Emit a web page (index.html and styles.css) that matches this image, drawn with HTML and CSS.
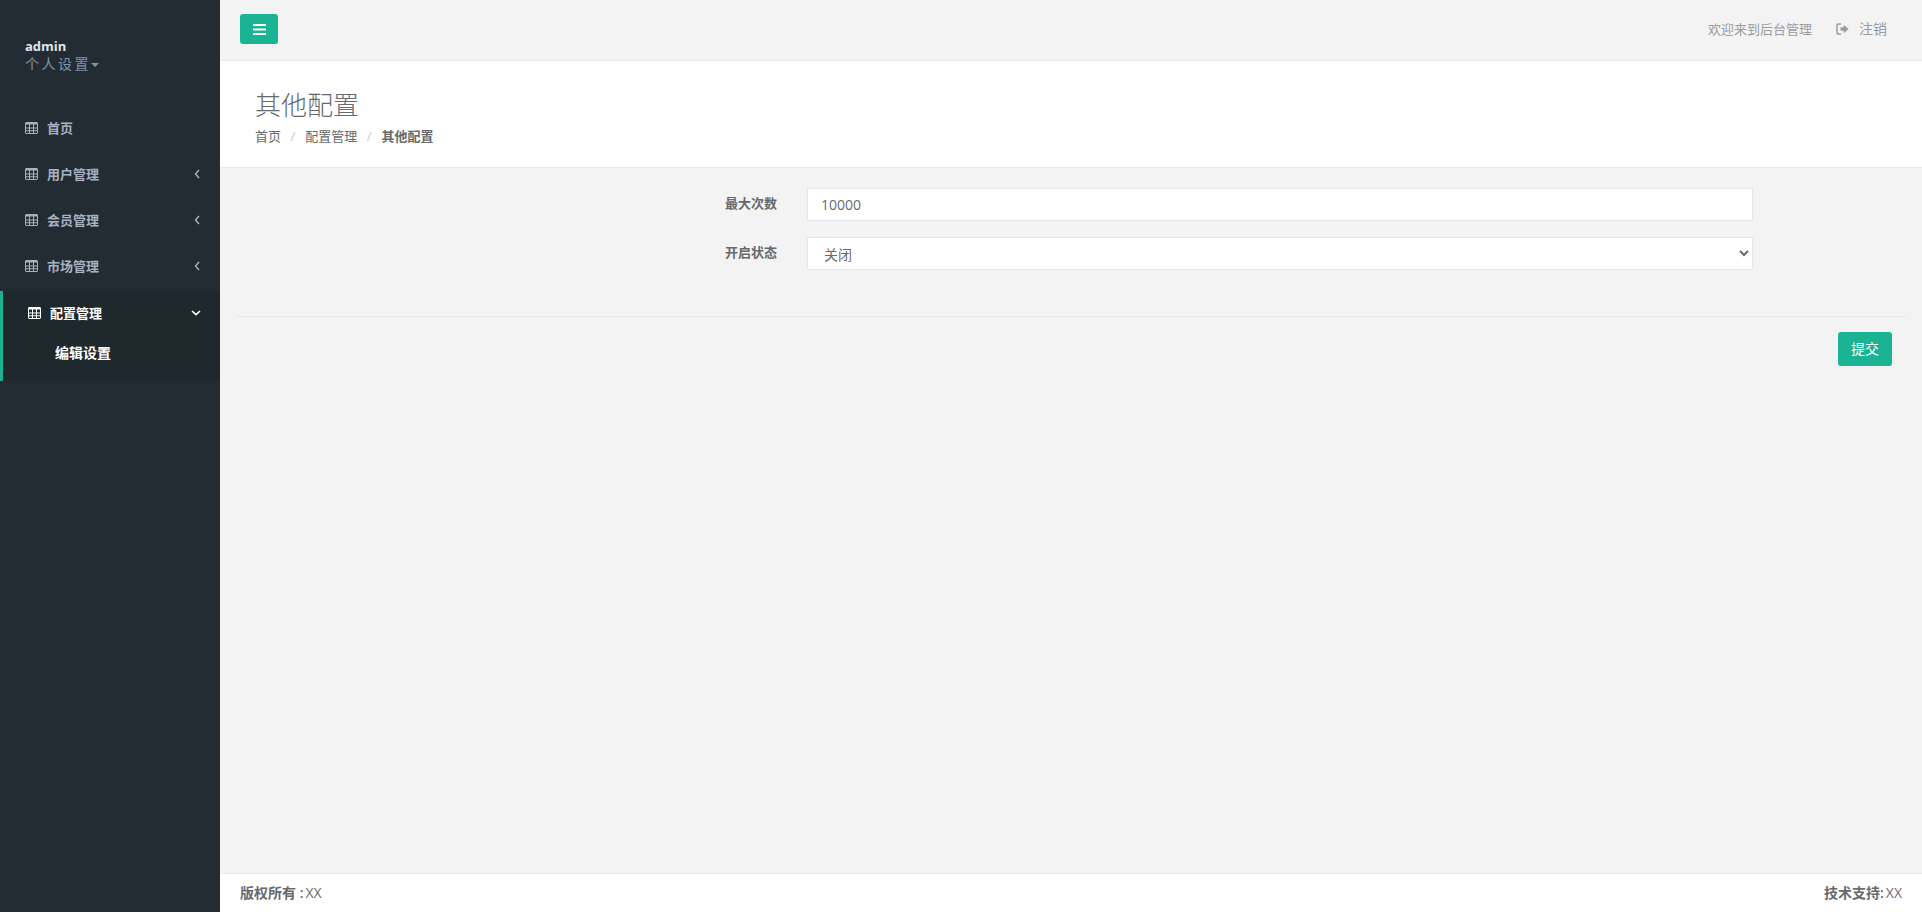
FILE: index.html
```html
<!DOCTYPE html>
<html lang="zh-CN">
<head>
<meta charset="utf-8">
<title>其他配置</title>
<link rel="stylesheet" href="styles.css">
</head>
<body>
<svg class="defs" width="0" height="0" aria-hidden="true">
  <symbol id="i-table" viewBox="0 0 13 12">
    <path d="M1 .5h11a.6.6 0 0 1 .5.5v10a.6.6 0 0 1-.5.5H1a.6.6 0 0 1-.5-.5V1A.6.6 0 0 1 1 .5Z" fill="none" stroke="currentColor"/>
    <path d="M.5 1h12v1.6H.5zM.5 5.4h12v1H.5zM.5 8.2h12v1H.5zM4 2h1v9.5H4zM8 2h1v9.5H8z" fill="currentColor"/>
  </symbol>
</svg>
<aside class="sidebar">
  <div class="profile">
    <div class="profile-name">admin</div>
    <div class="profile-link">个人设置<span class="caret"></span></div>
  </div>
  <ul class="menu">
    <li class="menu-item"><svg class="menu-icon"><use href="#i-table"/></svg><span class="menu-label">首页</span></li>
    <li class="menu-item"><svg class="menu-icon"><use href="#i-table"/></svg><span class="menu-label">用户管理</span><svg class="arrow" viewBox="0 0 6 10"><path d="M5 1 1.5 5 5 9" fill="none" stroke="currentColor" stroke-width="1.4"/></svg></li>
    <li class="menu-item"><svg class="menu-icon"><use href="#i-table"/></svg><span class="menu-label">会员管理</span><svg class="arrow" viewBox="0 0 6 10"><path d="M5 1 1.5 5 5 9" fill="none" stroke="currentColor" stroke-width="1.4"/></svg></li>
    <li class="menu-item"><svg class="menu-icon"><use href="#i-table"/></svg><span class="menu-label">市场管理</span><svg class="arrow" viewBox="0 0 6 10"><path d="M5 1 1.5 5 5 9" fill="none" stroke="currentColor" stroke-width="1.4"/></svg></li>
    <li class="menu-group">
      <div class="menu-item menu-item-active"><svg class="menu-icon"><use href="#i-table"/></svg><span class="menu-label">配置管理</span><svg class="arrow-down" viewBox="0 0 10 6"><path d="M1 1 5 4.6 9 1" fill="none" stroke="currentColor" stroke-width="1.6"/></svg></div>
      <div class="submenu-item">编辑设置</div>
    </li>
  </ul>
</aside>
<div class="page">
  <header class="topbar">
    <button class="toggle" type="button" aria-label="菜单"><svg viewBox="0 0 13 11" width="13" height="11"><path d="M0 0h13v2H0zM0 4.5h13v2H0zM0 9h13v2H0z" fill="currentColor"/></svg></button>
    <div class="topbar-right">
      <span class="welcome">欢迎来到后台管理</span>
      <span class="logout"><svg class="logout-icon" viewBox="0 0 13 12"><path d="M5 1H2.5A1.5 1.5 0 0 0 1 2.5v7A1.5 1.5 0 0 0 2.5 11H5" fill="none" stroke="currentColor" stroke-width="1.5"/><path d="M4.5 4.3h3.2V1.8L12.6 6 7.7 10.2V7.7H4.5z" fill="currentColor"/></svg>注销</span>
    </div>
  </header>
  <section class="heading">
    <h2 class="title">其他配置</h2>
    <ol class="crumbs">
      <li>首页</li>
      <li class="sep">/</li>
      <li>配置管理</li>
      <li class="sep">/</li>
      <li class="crumb-current">其他配置</li>
    </ol>
  </section>
  <main class="content">
    <form class="form">
      <div class="form-row">
        <label class="form-label">最大次数</label>
        <input class="control" type="text" value="10000">
      </div>
      <div class="form-row">
        <label class="form-label">开启状态</label>
        <select class="control control-select"><option>关闭</option></select>
      </div>
      <div class="divider"></div>
      <div class="actions"><button class="submit" type="button">提交</button></div>
    </form>
  </main>
  <footer class="footer">
    <span>版权所有 :<span class="footer-value">XX</span></span>
    <span>技术支持:<span class="footer-value">XX</span></span>
  </footer>
</div>
</body>
</html>
```
FILE: styles.css
```css
* { box-sizing: border-box; }
html, body { margin: 0; height: 100%; }
body {
  display: flex;
  height: 912px;
  overflow: hidden;
  background: #f3f3f4;
  color: #676a6c;
  font: 13px/1.43 "Open Sans", "Noto Sans CJK SC", sans-serif;
}
.defs { position: absolute; }
.sidebar {
  flex: 0 0 220px;
  background: #232c33;
  color: #a7b1c2;
}
.profile { padding: 37px 25px 0; height: 105px; }
.profile-name { color: #dfe4ed; font-weight: 700; line-height: 18px; }
.profile-link { color: #8095a8; font-size: 14px; letter-spacing: 2.5px; line-height: 18px; white-space: nowrap; }
.caret {
  display: inline-block;
  vertical-align: middle;
  border-top: 4px solid #8095a8;
  border-left: 4px solid transparent;
  border-right: 4px solid transparent;
}
.menu { list-style: none; margin: 0; padding: 0; }
.menu-item {
  display: flex;
  align-items: center;
  height: 46px;
  padding: 0 20px 0 25px;
  font-weight: 600;
}
.menu-icon { width: 13px; height: 12px; flex: none; margin-right: 9px; }
.menu-label { flex: 1; }
.arrow { width: 6px; height: 10px; flex: none; margin-right: 0; }
.arrow-down { width: 10px; height: 6px; flex: none; margin-right: -1px; }
.menu-group { background: #1f282c; border-left: 3px solid #1ab394; height: 90px; margin-top: 2px; }
.menu-item-active { color: #fff; height: 44px; }
.submenu-item { padding-left: 52px; color: #fff; font-size: 14px; font-weight: 700; line-height: 18px; margin-top: 9px; }
.page { flex: 1; min-width: 0; display: flex; flex-direction: column; }
.topbar {
  flex: none;
  height: 61px;
  display: flex;
  align-items: flex-start;
  justify-content: space-between;
  padding: 14px 35px 0 20px;
  border-bottom: 1px solid #e7eaec;
}
.toggle {
  width: 38px;
  height: 30px;
  padding: 0;
  border: 0;
  border-radius: 3px;
  background: #1ab394;
  color: #fff;
  display: flex;
  align-items: center;
  justify-content: center;
}
.topbar-right { display: flex; align-items: center; height: 30px; color: #999c9e; }
.welcome { margin-right: 24px; }
.logout { display: flex; align-items: center; font-size: 14px; }
.logout-icon { width: 13px; height: 12px; margin-right: 10px; }
.heading {
  flex: none;
  height: 107px;
  padding: 27px 35px 0;
  background: #fff;
  border-bottom: 1px solid #e7eaec;
}
.title { margin: 0; font-size: 26px; font-weight: 300; line-height: 34px; color: #676a6c; }
.crumbs { list-style: none; display: flex; margin: 5px 0 0; padding: 0; line-height: 18px; }
.sep { margin: 0 10px 0 9.5px; color: #ccc; }
.crumb-current { font-weight: 700; }
.content { flex: 1; padding: 20px 15px 0; }
.form-row { display: flex; align-items: flex-start; margin-bottom: 16px; }
.form-label { width: 572px; padding: 6px 30px 0 0; text-align: right; font-weight: 700; line-height: 18px; }
.control {
  width: 946px;
  height: 33px;
  padding: 6px 13px;
  background: #fff;
  border: 1px solid #e5e6e7;
  border-radius: 1px;
  color: #676a6c;
  font: inherit;
  font-size: 14px;
  outline: none;
}
.control-select { padding-left: 12px; }
.divider { margin-top: 46px; height: 1px; background: #e7eaec; }
.actions { display: flex; justify-content: flex-end; padding: 15px 15px 0 0; }
.submit {
  width: 54px;
  height: 34px;
  padding: 0;
  border: 0;
  border-radius: 3px;
  background: #1ab394;
  color: #fff;
  font: inherit;
  font-size: 14px;
}
.footer {
  flex: none;
  height: 39px;
  display: flex;
  justify-content: space-between;
  align-items: center;
  padding: 0 20px;
  background: #fff;
  border-top: 1px solid #e7eaec;
  font-size: 14px;
  font-weight: 600;
}
.footer-value { font-weight: 400; margin-left: 2px; }
```
